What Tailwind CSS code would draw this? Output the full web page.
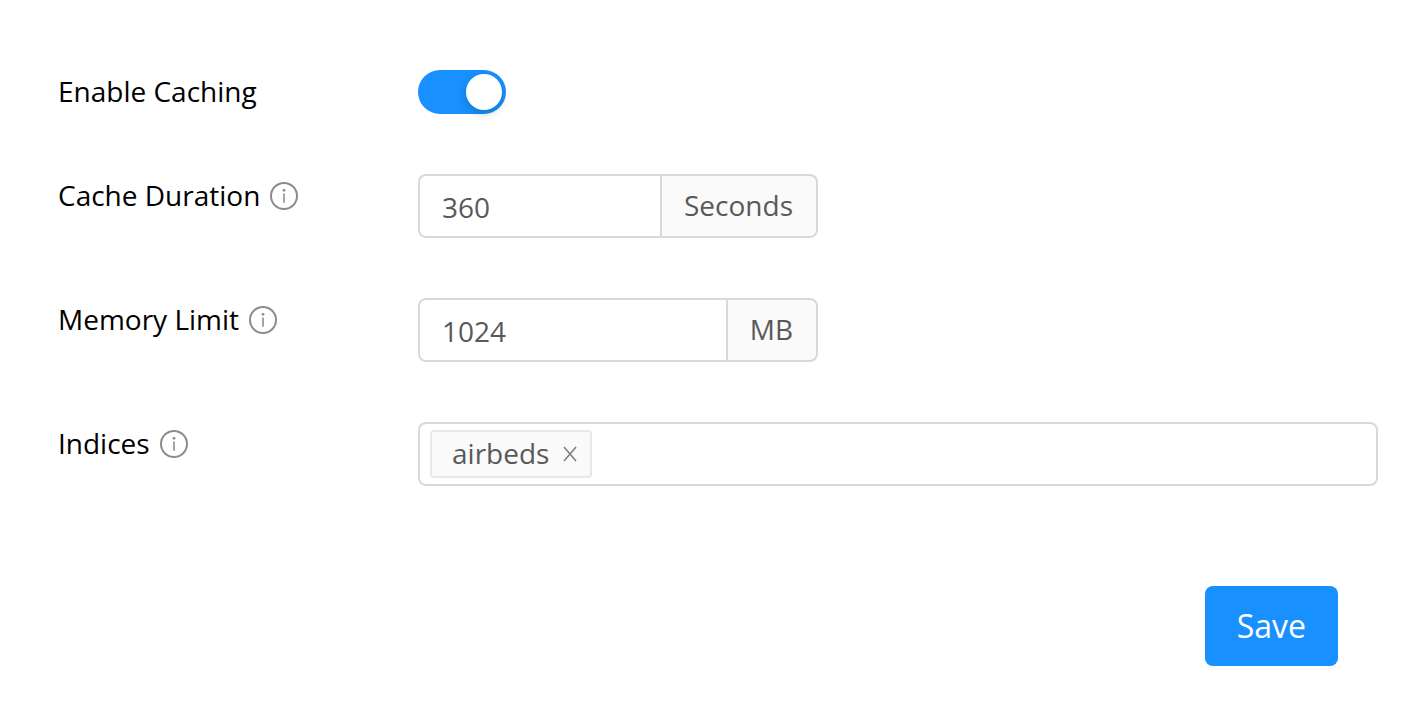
<!DOCTYPE html>
<html lang="en">
<head>
  <meta charset="UTF-8" />
  <meta name="viewport" content="width=device-width, initial-scale=1.0"/>
  <title>Cache settings</title>
  <script src="https://cdn.jsdelivr.net/npm/@tailwindcss/browser@4"></script>
</head>
<body class="bg-white font-['Open_Sans',sans-serif] text-[28px] leading-[42px] text-black">
  <form class="flex flex-col pt-[70px] pr-[38px] pb-[60px] pl-[58px]">
    <!-- Caching switch -->
    <div class="mb-[60px] flex items-start">
      <label for="enable-caching" class="w-[360px] shrink-0">Enable Caching</label>
      <span class="relative block h-[44px] w-[88px]">
        <input id="enable-caching" type="checkbox" role="switch" checked class="peer block h-[44px] w-[88px] cursor-pointer appearance-none rounded-full bg-[#bfbfbf] checked:bg-[#1890ff]" />
        <span class="pointer-events-none absolute top-1 left-1 size-9 rounded-full bg-white shadow-[0_4px_8px_rgba(0,35,11,0.2)] peer-checked:left-12"></span>
      </span>
    </div>

    <!-- Cache duration -->
    <div class="mb-[60px] flex items-start">
      <div class="flex w-[360px] shrink-0 items-start gap-[10px]">
        <label for="cache-duration">Cache Duration</label>
        <svg class="mt-2 size-7 text-[#8c8c8c]" viewBox="0 0 28 28" fill="none" stroke="currentColor" stroke-width="2">
          <circle cx="14" cy="14" r="13" />
          <path d="M14 11.500v9.200" stroke-width="1.600" />
          <circle cx="14" cy="8.300" r="1.400" fill="currentColor" stroke="none" />
        </svg>
      </div>
      <div class="flex h-16 w-[400px] text-[#595959]">
        <input id="cache-duration" type="text" value="360" class="min-w-0 flex-1 rounded-l-lg border-2 border-[#d9d9d9] px-[22px] pt-[2px] outline-none focus:border-[#40a9ff]" />
        <span class="flex items-center rounded-r-lg border-2 border-l-0 border-[#d9d9d9] bg-[#fafafa] pr-[23px] pb-[2px] pl-[22px]">Seconds</span>
      </div>
    </div>

    <!-- Memory limit -->
    <div class="mb-[60px] flex items-start">
      <div class="flex w-[360px] shrink-0 items-start gap-[10px]">
        <label for="memory-limit">Memory Limit</label>
        <svg class="mt-2 size-7 text-[#8c8c8c]" viewBox="0 0 28 28" fill="none" stroke="currentColor" stroke-width="2">
          <circle cx="14" cy="14" r="13" />
          <path d="M14 11.500v9.200" stroke-width="1.600" />
          <circle cx="14" cy="8.300" r="1.400" fill="currentColor" stroke="none" />
        </svg>
      </div>
      <div class="flex h-16 w-[400px] text-[#595959]">
        <input id="memory-limit" type="text" value="1024" class="min-w-0 flex-1 rounded-l-lg border-2 border-[#d9d9d9] px-[22px] pt-[2px] outline-none focus:border-[#40a9ff]" />
        <span class="flex items-center rounded-r-lg border-2 border-l-0 border-[#d9d9d9] bg-[#fafafa] pr-[23px] pb-[2px] pl-[22px]">MB</span>
      </div>
    </div>

    <!-- Indices -->
    <div class="mb-[100px] flex items-start">
      <div class="flex w-[360px] shrink-0 items-start gap-[10px]">
        <label for="indices">Indices</label>
        <svg class="mt-2 size-7 text-[#8c8c8c]" viewBox="0 0 28 28" fill="none" stroke="currentColor" stroke-width="2">
          <circle cx="14" cy="14" r="13" />
          <path d="M14 11.500v9.200" stroke-width="1.600" />
          <circle cx="14" cy="8.300" r="1.400" fill="currentColor" stroke="none" />
        </svg>
      </div>
      <div class="flex h-16 flex-1 items-center gap-2 rounded-lg border-2 border-[#d9d9d9] px-[10px] text-[#595959]">
        <span class="flex h-12 items-start gap-[14px] rounded border-2 border-[#e8e8e8] bg-[#fafafa] pr-[13px] pl-5">
          airbeds
          <button type="button" aria-label="Remove airbeds" class="cursor-pointer self-center text-[#808080]">
            <svg class="block h-4 w-[14px]" viewBox="0 0 14 16" fill="none" stroke="currentColor" stroke-width="1.600">
              <path d="M1 1l12 14M13 1L1 15" />
            </svg>
          </button>
        </span>
        <input id="indices" type="text" class="min-w-0 flex-1 outline-none" />
      </div>
    </div>

    <button type="submit" class="mr-10 h-20 cursor-pointer self-end rounded-lg bg-[#1890ff] px-8 text-[32px] text-white shadow-[0_4px_0_rgba(0,0,0,0.02)]">Save</button>
  </form>
</body>
</html>
